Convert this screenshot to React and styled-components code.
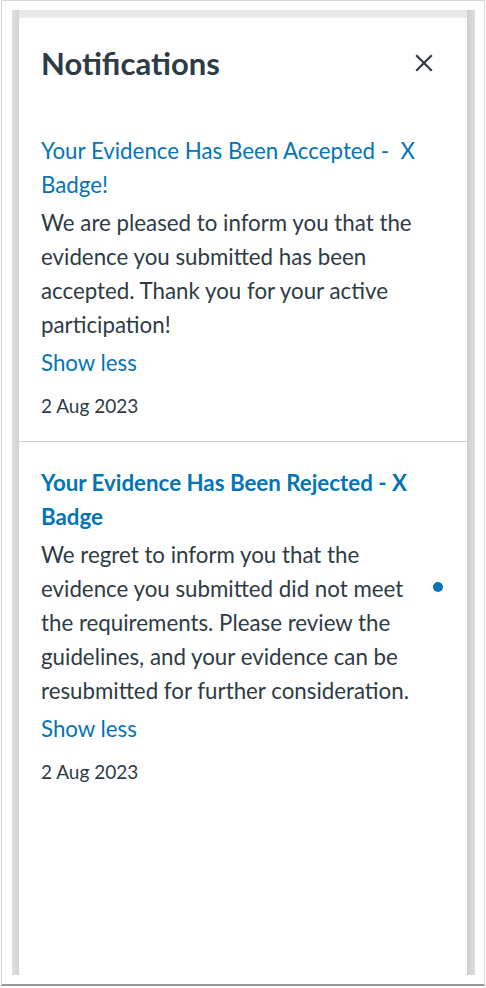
import React from 'react'
import styled, { createGlobalStyle } from 'styled-components'

const GlobalStyle = createGlobalStyle`
  html, body {
    margin: 0;
    padding: 0;
    background: #ffffff;
  }
  body {
    font-family: Lato, "Noto Sans", sans-serif;
    color: #2d3b45;
  }
`

const Frame = styled.div`
  box-sizing: border-box;
  width: 484px;
  height: 986px;
  margin-left: 1px;
  border: 1px solid #d6d6d6;
  border-bottom: 2px solid #9a9a9a;
  background: #ffffff;
  padding: 9px 9px 9px 10px;
  display: flex;
`

const Tray = styled.div`
  flex: 1;
  display: flex;
  background: linear-gradient(to right, #dedede 0, #d2d2d2 7px, #e9e9e9 7px, #e9e9e9 calc(100% - 8px), #cfcfcf calc(100% - 8px), #dcdcdc 100%);
  padding: 8px 8px 0 7px;
`

const Panel = styled.div`
  flex: 1;
  background: #ffffff;
  display: flex;
  flex-direction: column;
`

const Header = styled.div`
  display: flex;
  align-items: center;
  justify-content: space-between;
  padding: 26px 34px 0 22px;
  height: 38px;
`

const Title = styled.h2`
  margin: 0;
  font-size: 31px;
  font-weight: 700;
  color: #2d3b45;
`

const CloseButton = styled.button`
  border: 0;
  background: none;
  padding: 0;
  width: 18px;
  height: 18px;
  display: flex;
  color: #2d3b45;
`

const List = styled.div`
  display: flex;
  flex-direction: column;
  margin-top: 52px;
`

const Item = styled.div`
  padding: 0 22px 21px 22px;
  border-bottom: ${({ $last }) => ($last ? 'none' : '1px solid #c7cdd1')};
  padding-top: ${({ $first }) => ($first ? '0' : '24px')};
`

const Row = styled.div`
  display: flex;
  align-items: center;
`

const Texts = styled.div`
  width: 380px;
  flex-shrink: 0;
`

const ItemTitle = styled.a`
  display: block;
  font-size: 22.3px;
  line-height: 34px;
  color: #0374b5;
  font-weight: ${({ $unread }) => ($unread ? 700 : 400)};
  text-decoration: none;
  margin-bottom: 4px;
`

const Body = styled.p`
  margin: 0;
  font-size: 22.3px;
  line-height: 34px;
  color: #2d3b45;
`

const Dot = styled.span`
  width: 10px;
  height: 10px;
  border-radius: 50%;
  background: #0374b5;
  margin-left: 12px;
`

const ShowLess = styled.a`
  display: block;
  margin-top: 4px;
  font-size: 22.3px;
  line-height: 34px;
  color: #0374b5;
`

const DateText = styled.div`
  margin-top: 12px;
  font-size: 19px;
  line-height: 28px;
  color: #2d3b45;
`

const notifications = [
  {
    title: 'Your Evidence Has Been Accepted -\u00a0 X Badge!',
    body: 'We are pleased to inform you that the evidence you submitted has been accepted. Thank you for your active participation!',
    date: '2 Aug 2023',
    unread: false,
  },
  {
    title: 'Your Evidence Has Been Rejected - X Badge',
    body: 'We regret to inform you that the evidence you submitted did not meet the requirements. Please review the guidelines, and your evidence can be resubmitted for further consideration.',
    date: '2 Aug 2023',
    unread: true,
  },
]

const App = () => (
  <>
    <GlobalStyle />
    <Frame>
      <Tray>
        <Panel>
          <Header>
            <Title>Notifications</Title>
            <CloseButton aria-label="Close">
              <svg width="18" height="18" viewBox="0 0 18 18">
                <path d="M2 2 L16 16 M16 2 L2 16" stroke="currentColor" strokeWidth="2.2" strokeLinecap="square" />
              </svg>
            </CloseButton>
          </Header>
          <List>
            {notifications.map((n, i) => (
              <Item key={i} $first={i === 0} $last={i === notifications.length - 1}>
                <Row>
                  <Texts>
                    <ItemTitle $unread={n.unread}>{n.title}</ItemTitle>
                    <Body>{n.body}</Body>
                  </Texts>
                  {n.unread && <Dot />}
                </Row>
                <ShowLess>Show less</ShowLess>
                <DateText>{n.date}</DateText>
              </Item>
            ))}
          </List>
        </Panel>
      </Tray>
    </Frame>
  </>
)

export default App
